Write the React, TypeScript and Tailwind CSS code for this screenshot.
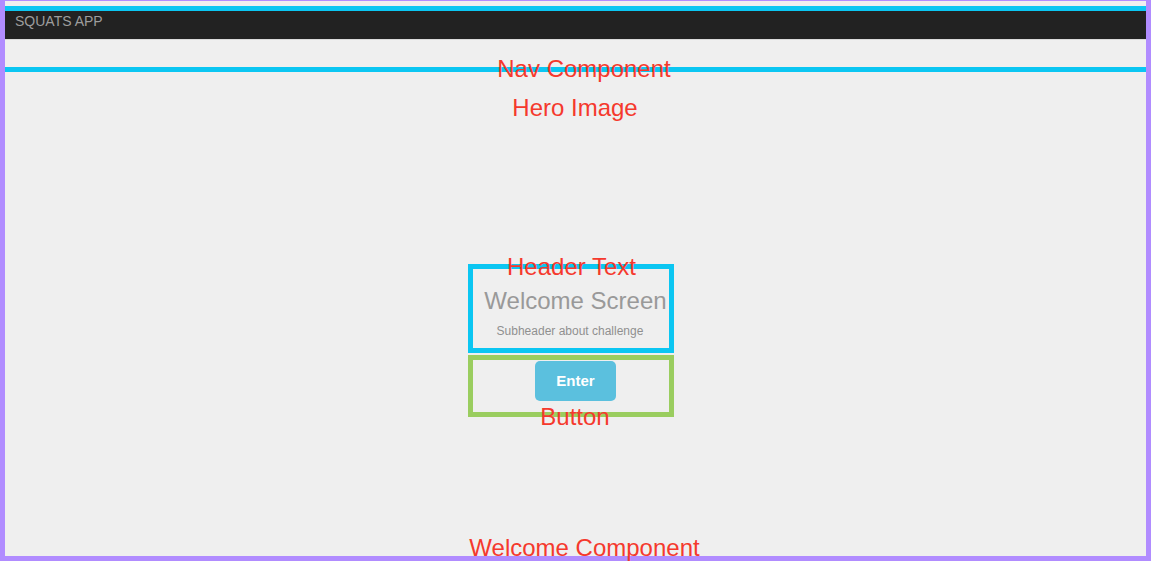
import React from "react";

function Label({ text, x, y }: { text: string; x: number; y: number }) {
  return (
    <div
      className="absolute -translate-x-1/2 whitespace-nowrap text-[24px] leading-[24px] text-[#f5392d]"
      style={{ left: x, top: y }}
    >
      {text}
    </div>
  );
}

export default function App() {
  return (
    <div className="relative w-[1151px] h-[561px] overflow-hidden bg-[#efefef] font-['Liberation_Sans',Arial,sans-serif]">
      {/* Nav component */}
      <div className="pt-[11px] px-[5px]">
        <nav className="h-[29px] bg-[#222222] pt-[3px] px-[10px] border-b border-[#dadada] text-[14px] leading-[14px] text-[#9d9d9d]">
          SQUATS APP
        </nav>
      </div>

      {/* Welcome component content */}
      <main className="mt-[249px] flex flex-col items-center">
        <h1 className="text-[24px] leading-[24px] text-[#999999]">Welcome Screen</h1>
        <p className="mt-[12px] pr-[11px] text-[12px] leading-[12px] text-[#8f8f8f]">
          Subheader about challenge
        </p>
        <button className="mt-[24px] w-[81px] h-[40px] rounded-[5px] bg-[#5bc0de] text-white text-[15px] font-bold">
          Enter
        </button>
      </main>

      {/* Annotation overlays */}
      <div className="pointer-events-none absolute inset-0 border-solid border-[#b18cff] border-t-[1px] border-l-[5px] border-r-[5px] border-b-[5px]" />
      <div className="pointer-events-none absolute left-[5px] right-[5px] top-[6px] h-[66px] border-solid border-[#0bc6f2] border-t-[5px] border-b-[5px]" />
      <div className="pointer-events-none absolute left-[468px] top-[264px] w-[206px] h-[89px] border-[5px] border-solid border-[#0bc6f2]" />
      <div className="pointer-events-none absolute left-[468px] top-[355px] w-[206px] h-[62px] border-[5px] border-solid border-[#9acd5f]" />

      <Label text="Nav Component" x={584} y={57} />
      <Label text="Hero Image" x={575} y={96} />
      <Label text="Header Text" x={571.5} y={255} />
      <Label text="Button" x={575} y={405} />
      <Label text="Welcome Component" x={584.5} y={536} />
    </div>
  );
}
